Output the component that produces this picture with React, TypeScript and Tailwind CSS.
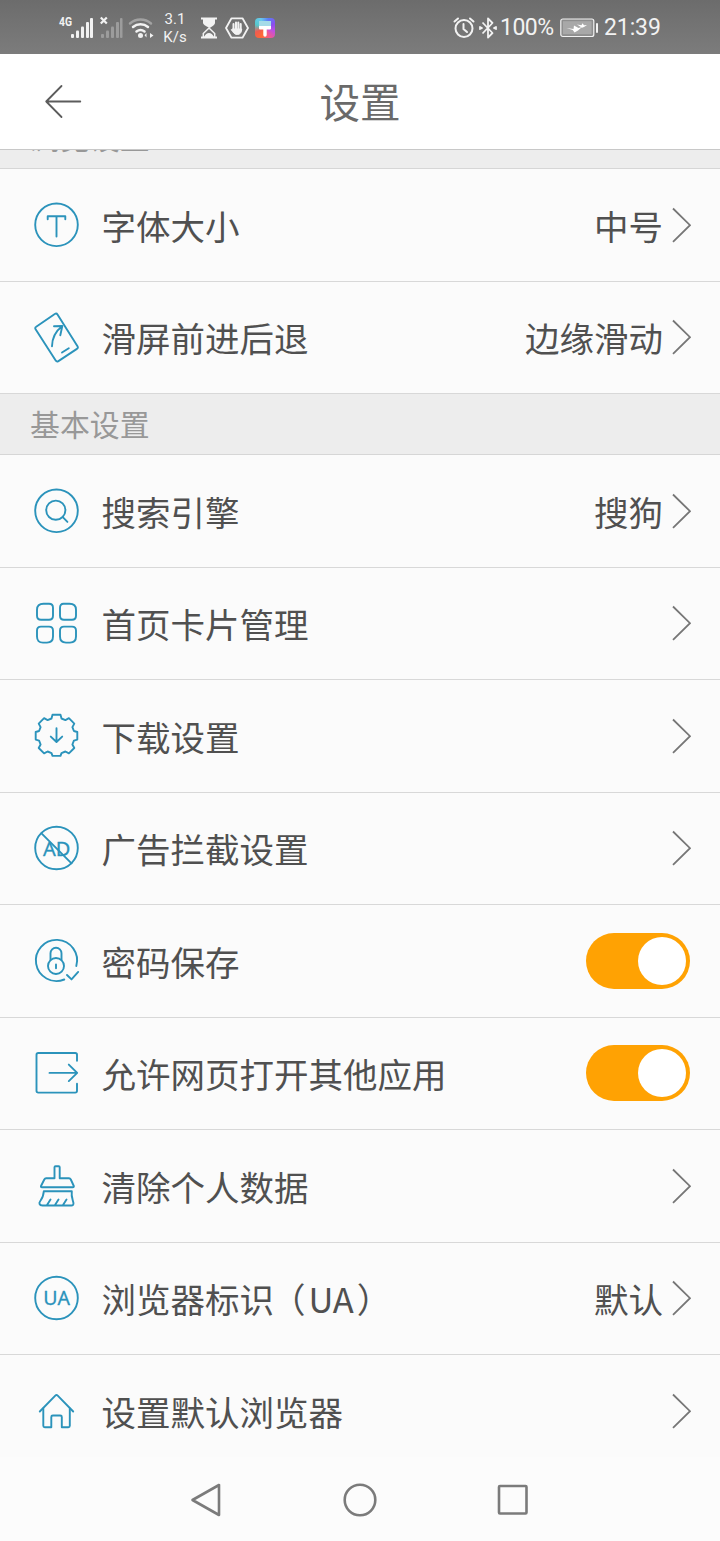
import React, { useState } from 'react';

interface SettingItem {
  id: string;
  label: React.ReactNode;
  value?: string;
  toggle?: boolean;
  icon: React.ReactNode;
}

const Icon: React.FC<{ children: React.ReactNode }> = ({ children }) => (
  <svg
    viewBox="0 0 46 46"
    className="w-[46px] h-[46px] shrink-0 overflow-visible"
    fill="none"
    stroke="#2b93bb"
    strokeWidth="1.9"
    strokeLinecap="round"
    strokeLinejoin="round"
  >
    {children}
  </svg>
);

const browseItems: SettingItem[] = [
  {
    id: 'font',
    label: '字体大小',
    value: '中号',
    icon: (
      <Icon>
        <circle cx="22.5" cy="22.8" r="21.3" />
        <path d="M13.7 17.3v-3h17.6v3M22.5 14.3v20.2" />
      </Icon>
    ),
  },
  {
    id: 'swipe',
    label: '滑屏前进后退',
    value: '边缘滑动',
    icon: (
      <Icon>
        <path d="M2.2 12.700L20.800 0q1.700-1 2.700.6L43.500 32.300q1 1.600-.6 2.600L24.400 47.100q-1.700 1-2.700-.6L1.600 15.300q-1-1.600.6-2.600z" />
        <path d="M18 32.200c.2-8.500 3.500-15 9.800-19.800M20 12.300l8.300-.3-2 9.300M28 38.500l6.800-4.200" />
      </Icon>
    ),
  },
];

const basicItems: SettingItem[] = [
  {
    id: 'search',
    label: '搜索引擎',
    value: '搜狗',
    icon: (
      <Icon>
        <circle cx="22.5" cy="22.8" r="21.3" />
        <circle cx="21.8" cy="22.2" r="9.6" />
        <path d="M28.8 29.200l4.600 4.700" />
      </Icon>
    ),
  },
  {
    id: 'cards',
    label: '首页卡片管理',
    icon: (
      <Icon>
        <path d="M9.500 3.800H15q4 0 4 4v8q0 4-4 4H7q-4 0-4-4v-6q0-6 6.500-6z" />
        <path d="M29.500 3.800h6q6.500 0 6.500 6v6q0 4-4 4h-8q-4 0-4-4v-8q0-4 3.500-4z" />
        <path d="M7 26.600h8q4 0 4 4v6q0 6-6 6H9q-6 0-6-6v-6q0-4 4-4z" />
        <path d="M30 26.600h8q4 0 4 4v6q0 6-6 6h-4q-6 0-6-6v-6q0-4 4-4z" />
      </Icon>
    ),
  },
  {
    id: 'download',
    label: '下载设置',
    icon: (
      <Icon>
        <path d="M17.500 5.500l1-3.700h8l1 3.700 3.900 1.600 3.500-1.900 5.400 5.400-1.900 3.500 1.500 3.900 3.400 1v7.600l-3.400 1-1.500 3.900 1.900 3.500-5.400 5.400-3.500-1.900-3.900 1.600-1 2.800h-8l-1-2.800-3.900-1.600-3.500 1.900-5.400-5.400 1.900-3.500-1.500-3.900-3.400-1V19l3.400-1 1.500-3.900-1.900-3.500 5.400-5.400 3.500 1.900z" />
        <path d="M22.500 15.200v13.500M16.800 23.600l5.700 5.400 5.700-5.400" />
      </Icon>
    ),
  },
  {
    id: 'adblock',
    label: '广告拦截设置',
    icon: (
      <Icon>
        <circle cx="22.5" cy="23" r="21.3" />
        <path d="M7.500 8.300l30 30" />
        <text x="22.800" y="30.500" textAnchor="middle" fontSize="20" fill="#2b93bb" strokeWidth="0.300" fontFamily="'Noto Sans', sans-serif">
          AD
        </text>
      </Icon>
    ),
  },
  {
    id: 'password',
    label: '密码保存',
    toggle: true,
    icon: (
      <Icon>
        <path d="M42.300 28a20.600 20.600 0 1 0-12 13.500" />
        <circle cx="22" cy="28" r="8" />
        <path d="M16.500 21.500v-6.200a5.500 5.500 0 0 1 11 0v6.200M22 26.500v3.800M33 37l4.500 4.400 6.700-7.500" />
      </Icon>
    ),
  },
  {
    id: 'openapp',
    label: '允许网页打开其他应用',
    toggle: true,
    icon: (
      <Icon>
        <path d="M43 10.800V4.800q0-1.800-1.800-1.800H4.300q-1.800 0-1.800 1.800v36q0 1.800 1.800 1.800h36.900q1.800 0 1.800-1.800v-7M15.500 22.900H43M34.800 14.600l8.400 8.300-8.400 8.200" />
      </Icon>
    ),
  },
  {
    id: 'clear',
    label: '清除个人数据',
    icon: (
      <Icon>
        <path d="M20.500 15.300v-11q0-1 1-1h3.200q1 0 1 1v11H35q1.200 0 1.800 1.200l3 6.500q.3 1.300-1 1.300H8q-1.500 0-1-1.300l3.300-6.500q.6-1.200 1.800-1.200z" />
        <path d="M9.800 28.300h28c-.8 5 .8 8 1.600 11.500.4 1.800-.6 2.700-2 2.700H8.500c-3.500 0-3.700-2.700-2.200-4.500 2.500-3 3.200-5.500 3.500-9.700zM13 42l3.500-5.500M21 42l3.500-5.500M29 42l3.500-5.500" />
      </Icon>
    ),
  },
  {
    id: 'ua',
    label: (
      <>
        浏览器标识<span className="-ml-[3px]">（</span>
        <span className="mx-[3px]">UA</span>）
      </>
    ),
    value: '默认',
    icon: (
      <Icon>
        <circle cx="22.5" cy="23" r="21.3" />
        <text x="22.800" y="30" textAnchor="middle" fontSize="19.500" letterSpacing="0.300" fill="#2b93bb" strokeWidth="0.300" fontFamily="'Noto Sans', sans-serif">
          UA
        </text>
      </Icon>
    ),
  },
  {
    id: 'default',
    label: '设置默认浏览器',
    icon: (
      <Icon>
        <path d="M5.800 23.500L21.300 7.700q1.200-1.200 2.400 0l15.500 15.800" />
        <path d="M9.300 20.500v17.300q0 1.500 1.500 1.500h6.500V29q0-1.500 1.500-1.500h7.500q1.500 0 1.500 1.500v10.300h6.500q1.500 0 1.500-1.500V20.500" />
      </Icon>
    ),
  },
];

const StatusBar: React.FC = () => (
  <div className="h-[54px] shrink-0 flex items-center pt-px pl-[58px] pr-[59px] bg-linear-to-b from-[#6c6c6c] to-[#7c7c7c] text-[#f2f2f2] font-[Roboto,sans-serif]">
    <svg viewBox="0 0 36 28" className="w-9 h-7" fill="#f2f2f2">
      <text x="1" y="12" fontSize="12" fontWeight="700" textLength="13" lengthAdjust="spacingAndGlyphs">4G</text>
      <rect x="13" y="20" width="3" height="4" rx="1" />
      <rect x="18" y="16.500" width="3" height="7.500" rx="1" />
      <rect x="23" y="12.500" width="3" height="11.500" rx="1" />
      <rect x="28" y="8" width="3" height="16" rx="1" />
      <rect x="32" y="4" width="3" height="20" rx="1" />
    </svg>
    <svg viewBox="0 0 26 28" className="ml-1.5 w-[26px] h-7" fill="#9c9c9c">
      <path d="M0.800 3.500l6 6M6.800 3.500l-6 6" stroke="#f2f2f2" strokeWidth="2.200" />
      <rect x="1" y="20" width="3" height="4" rx="1" />
      <rect x="6" y="16.500" width="3" height="7.500" rx="1" />
      <rect x="11" y="12.500" width="3" height="11.500" rx="1" />
      <rect x="16" y="8" width="3" height="16" rx="1" />
      <rect x="20" y="4" width="2.500" height="20" rx="1" />
    </svg>
    <svg viewBox="0 0 28 28" className="ml-0.5 w-7 h-7" fill="none" strokeWidth="2.500" strokeLinecap="round">
      <path d="M2 9.500a16 16 0 0 1 21 0" stroke="#a2a2a2" />
      <path d="M5 13a11.500 11.500 0 0 1 15 0M8.500 17.500a6.500 6.500 0 0 1 8 0" stroke="#f2f2f2" />
      <circle cx="12.500" cy="21.500" r="2.500" fill="#f2f2f2" />
      <path d="M18.500 19v4.500l-2-2.200zM22 19v5l3.500-2.500z" fill="#f2f2f2" />
    </svg>
    <div className="ml-[6px] w-[26px] text-center text-[15px] leading-[18px]">
      <div>3.1</div>
      <div>K/s</div>
    </div>
    <svg viewBox="0 0 18 24" className="ml-3 w-[18px] h-6" fill="#f2f2f2">
      <path d="M1 2.500h16M1 21.500h16" stroke="#f2f2f2" strokeWidth="2.200" />
      <path d="M3 3h12v4q0 2-5.300 5Q3 9 3 7z" />
      <path d="M3.300 21v-3.500L9 12l5.700 5.500V21" fill="none" stroke="#f2f2f2" strokeWidth="1.500" />
      <path d="M4 21q2-4 5-4t5 4z" />
    </svg>
    <svg viewBox="0 0 24 24" className="ml-[7px] w-6 h-6" fill="none" stroke="#f2f2f2" strokeLinecap="round" strokeLinejoin="round">
      <path d="M6.500 2.300h11L23 12l-5.500 9.700h-11L1 12z" strokeWidth="1.800" />
      <path d="M8.500 8v6M11 6.500V13M13.300 6.500V13M15.700 8v6" strokeWidth="2" />
      <path d="M7.500 13h9.200c0 3.500-1.500 5.500-4.500 5.500s-3.800-2-5.700-4.500z" fill="#f2f2f2" strokeWidth="1" />
    </svg>
    <div className="ml-1.5 w-5 h-5 rounded bg-[conic-gradient(from_20deg,#5b7df5,#8a4df0,#c04fe0,#f25a8a,#ff6a35,#ef5b50,#55c8cc,#69c9ed,#5b7df5)] flex items-center justify-center">
      <svg viewBox="0 0 20 20" className="w-5 h-5" fill="#fff">
        <path d="M4 8h12v2.500q0 1-1 1h-3.300V17a1.700 1.700 0 0 1-3.400 0v-5.500H5q-1 0-1-1z" />
        <path d="M4 3h12v5H4z" fill="#a5dbe8" />
      </svg>
    </div>

    <div className="ml-auto flex items-center">
      <svg viewBox="0 0 22 24" className="w-[22px] h-6" fill="none" stroke="#f2f2f2" strokeWidth="2" strokeLinecap="round">
        <circle cx="11" cy="12.500" r="8.500" />
        <path d="M10.500 8v5l3.500 3M1.500 5.500l3.500-3M20.500 5.500l-3.500-3" />
      </svg>
      <svg viewBox="0 0 18 24" className="ml-1 w-[18px] h-6" fill="none" stroke="#f2f2f2" strokeWidth="1.800" strokeLinejoin="round">
        <path d="M3.500 6.500l10 10.500L9 21.500v-19L13.500 7l-10 10.500" />
        <path d="M1 11l2 1-2 1zM17 11l-2 1 2 1z" />
      </svg>
      <span className="ml-[3px] w-[54px] whitespace-nowrap text-[23px] leading-none tracking-[-0.5px]">100%</span>
      <svg viewBox="0 0 38 20" className="ml-1.5 w-[38px] h-5">
        <rect x="0.800" y="1" width="33" height="17.500" rx="2" fill="#8e8e8e" stroke="#f2f2f2" strokeWidth="1.200" />
        <rect x="3" y="3.200" width="28.600" height="13" fill="#a8a8a8" />
        <path d="M6.500 10l7 1 .5-3.500 4.500 2.500 3.500-1-4 3.500-3.500 2-1.800-2.500zM17 6.500l4.500.8 1-2 1.500 2 3-.3-3 2-2 .8z" fill="#fff" />
        <rect x="36" y="5" width="2" height="10" rx="1" fill="#f2f2f2" />
      </svg>
      <span className="ml-1.5 w-[57px] whitespace-nowrap text-[23px] leading-none tracking-[-0.1px]">21:39</span>
    </div>
  </div>
);

const Header: React.FC = () => (
  <header className="h-24 shrink-0 bg-white border-b border-[#c8c8c8] flex items-center justify-between px-11">
    <button className="w-10 h-10 -mt-px" aria-label="back">
      <svg viewBox="0 0 40 40" className="w-10 h-10" fill="none" stroke="#5c5c5c" strokeWidth="1.800" strokeLinecap="round" strokeLinejoin="round">
        <path d="M36.300 20.500H2.200M17.500 5L2.200 20.500 17.500 36" />
      </svg>
    </button>
    <h1 className="text-[40.6px] leading-none text-[#6a6a6a]">设置</h1>
    <div className="w-10" />
  </header>
);

const SectionTitle: React.FC<{ title: string; className?: string }> = ({ title, className = '' }) => (
  <div className={`h-[61px] shrink-0 flex items-center pl-[30px] bg-[#ededed] border-b border-[#d6d6d6] ${className}`}>
    <h2 className="text-[29.9px] leading-none text-[#989898]">{title}</h2>
  </div>
);

const Chevron: React.FC = () => (
  <svg viewBox="0 0 20 36" className="w-5 h-9" fill="none" stroke="#767676" strokeWidth="1.800">
    <path d="M2 1.500l17 16.700L2 34.900" />
  </svg>
);

const SettingRow: React.FC<{ item: SettingItem; last?: boolean }> = ({ item, last }) => {
  const [on, setOn] = useState(true);

  return (
    <div className={`h-[112.5px] shrink-0 flex items-center pl-[34px] pr-[29px] ${last ? '' : 'border-b border-[#d8d8d8]'}`}>
      {item.icon}
      <span className="ml-[21.5px] text-[34.5px] leading-none whitespace-nowrap text-[#505050]">{item.label}</span>
      <div className="ml-auto flex items-center">
        {item.toggle ? (
          <button
            role="switch"
            aria-checked={on}
            onClick={() => setOn(!on)}
            className={`w-[104px] h-[56px] mr-px rounded-full p-1 flex items-center ${on ? 'bg-[#ffa203] justify-end' : 'bg-[#ccc] justify-start'}`}
          >
            <span className="w-12 h-12 rounded-full bg-white" />
          </button>
        ) : (
          <>
            {item.value && <span className="mr-2 text-[34.5px] leading-none text-[#505050]">{item.value}</span>}
            <Chevron />
          </>
        )}
      </div>
    </div>
  );
};

const NavBar: React.FC = () => (
  <nav className="h-[84px] shrink-0 bg-[#fcfcfc] flex items-center justify-center gap-[117px] pt-0.5">
    <svg viewBox="0 0 36 36" className="w-9 h-9" fill="none" stroke="#7b7b7b" strokeWidth="2.600" strokeLinejoin="round">
      <path d="M30 3v30L3.500 18z" />
    </svg>
    <svg viewBox="0 0 36 36" className="w-9 h-9" fill="none" stroke="#7b7b7b" strokeWidth="2.600">
      <circle cx="18" cy="18" r="15.300" />
    </svg>
    <svg viewBox="0 0 36 36" className="w-9 h-9" fill="none" stroke="#7b7b7b" strokeWidth="2.600">
      <rect x="4" y="4" width="27.500" height="27.500" rx="1" />
    </svg>
  </nav>
);

const App: React.FC = () => (
  <div className="w-[720px] h-[1541px] overflow-hidden flex flex-col bg-[#fbfbfb] font-['Noto_Sans_CJK_SC',sans-serif]">
    <StatusBar />
    <Header />
    {/* scrolled list: the first section title is partly under the header */}
    <main className="flex-1 min-h-0 overflow-hidden">
      <div className="-mt-[42px] flex flex-col">
        <SectionTitle title="浏览设置" className="pb-[2px]" />
        {browseItems.map((item) => (
          <SettingRow key={item.id} item={item} />
        ))}
        <SectionTitle title="基本设置" />
        {basicItems.map((item, i) => (
          <SettingRow key={item.id} item={item} last={i === basicItems.length - 1} />
        ))}
      </div>
    </main>
    <NavBar />
  </div>
);

export default App;
